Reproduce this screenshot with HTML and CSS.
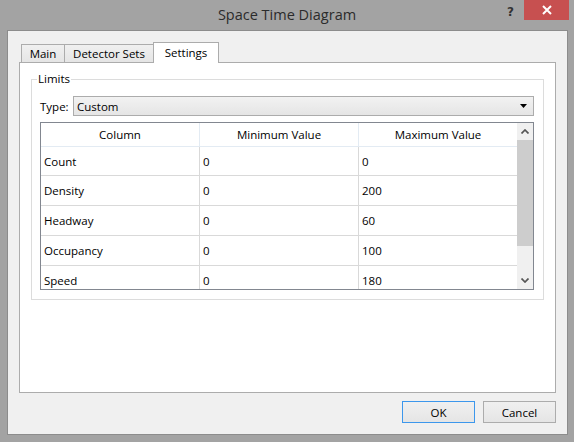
FILE: index.html
```html
<!DOCTYPE html>
<html lang="en">
<head>
    <meta charset="UTF-8">
    <title>Space Time Diagram</title>
    <link rel="stylesheet" href="styles.css">
</head>
<body>
    <div class="window">
        <!-- title bar -->
        <div class="titlebar">
            <div></div>
            <div class="title">Space Time Diagram</div>
            <div class="controls">
                <span class="help">?</span>
                <div class="close">
                    <svg width="10" height="10" viewBox="0 0 10 10">
                        <path d="M1 1 L9 9 M9 1 L1 9" stroke="#fff" stroke-width="2"/>
                    </svg>
                </div>
            </div>
        </div>

        <div class="client">
            <!-- tabs -->
            <div class="tabs">
                <div class="tab tab-main">Main</div>
                <div class="tab tab-sets">Detector Sets</div>
                <div class="tab tab-settings active">Settings</div>
            </div>

            <div class="panel">
                <fieldset class="limits">
                    <legend>Limits</legend>
                    <div class="type-row">
                        <label>Type:</label>
                        <div class="combo">
                            <span>Custom</span>
                            <svg width="7" height="4" viewBox="0 0 7 4"><path d="M0 0 H7 L3.5 4 Z" fill="#000"/></svg>
                        </div>
                    </div>

                    <div class="grid">
                        <div class="grid-body">
                            <div class="cell head">Column</div>
                            <div class="cell head">Minimum Value</div>
                            <div class="cell head">Maximum Value</div>

                            <div class="cell">Count</div>
                            <div class="cell">0</div>
                            <div class="cell">0</div>

                            <div class="cell">Density</div>
                            <div class="cell">0</div>
                            <div class="cell">200</div>

                            <div class="cell">Headway</div>
                            <div class="cell">0</div>
                            <div class="cell">60</div>

                            <div class="cell">Occupancy</div>
                            <div class="cell">0</div>
                            <div class="cell">100</div>

                            <div class="cell">Speed</div>
                            <div class="cell">0</div>
                            <div class="cell">180</div>
                        </div>
                        <div class="scrollbar">
                            <div class="arrow">
                                <svg width="8" height="5" viewBox="0 0 8 5"><path d="M0.5 4.5 L4 1 L7.5 4.5" fill="none" stroke="#555" stroke-width="1.7"/></svg>
                            </div>
                            <div class="thumb"></div>
                            <div class="track"></div>
                            <div class="arrow">
                                <svg width="8" height="5" viewBox="0 0 8 5"><path d="M0.5 0.5 L4 4 L7.5 0.5" fill="none" stroke="#555" stroke-width="1.7"/></svg>
                            </div>
                        </div>
                    </div>
                </fieldset>
            </div>

            <div class="buttons">
                <button class="btn default">OK</button>
                <button class="btn">Cancel</button>
            </div>
        </div>
    </div>
</body>
</html>
```

FILE: styles.css
```css
/* base */
* {
    box-sizing: border-box;
}

body {
    margin: 0;
    font-family: "Open Sans", "Liberation Sans", sans-serif;
    font-size: 11.5px;
    color: #000;
}

.window {
    width: 574px;
    height: 442px;
    background-color: #a3a3a3;
    display: flex;
    flex-direction: column;
}

/* title bar */
.titlebar {
    height: 30px;
    display: grid;
    grid-template-columns: 1fr auto 1fr;
}

.title {
    font-size: 14.5px;
    color: #2b2b2b;
    line-height: 30px;
}

.controls {
    justify-self: end;
    display: flex;
    align-items: flex-start;
    margin-right: 5px;
}

.help {
    font-family: "DejaVu Sans", sans-serif;
    font-weight: bold;
    font-size: 12px;
    color: #333;
    line-height: 12px;
    margin-top: 6px;
    margin-right: 10px;
}

.close {
    width: 45px;
    height: 20px;
    background-color: #c75050;
    display: flex;
    align-items: center;
    justify-content: center;
}

/* client area */
.client {
    flex: 1;
    margin: 0 6px 7px 7px;
    background-color: #f0f0f0;
    border: 1px solid #8c8c8c;
    padding: 11px;
    display: flex;
    flex-direction: column;
}

.tabs {
    display: flex;
    align-items: flex-end;
    height: 20px;
    padding-left: 2px;
}

.tab {
    height: 18px;
    border: 1px solid #acacac;
    border-bottom: none;
    background: linear-gradient(#f0f0f0, #e5e5e5);
    text-align: center;
    line-height: 17px;
    margin-right: -1px;
}

.tab-main {
    width: 44px;
}

.tab-sets {
    width: 90px;
}

.tab-settings {
    width: 66px;
}

.tab.active {
    height: 21px;
    margin-bottom: -1px;
    background: #fff;
    position: relative;
    z-index: 1;
    line-height: 19px;
}

.panel {
    flex: 1;
    background-color: #fff;
    border: 1px solid #acacac;
}

/* group box */
.limits {
    margin: 9px 11px 0;
    border: 1px solid #dcdcdc;
    padding: 10px 9px 9px 8px;
    min-width: 0;
}

.limits legend {
    padding: 0 1px;
    margin-left: -3px;
    line-height: 14px;
}

.type-row {
    display: flex;
    align-items: center;
}

.type-row label {
    width: 33px;
}

.combo {
    flex: 1;
    height: 20px;
    border: 1px solid #acacac;
    background: linear-gradient(#f2f2f2, #e5e5e5);
    display: flex;
    align-items: center;
    justify-content: space-between;
    padding: 0 6px 0 3px;
}

/* data grid */
.grid {
    margin-top: 6px;
    height: 168px;
    border: 1px solid #828790;
    display: flex;
}

.grid-body {
    flex: 1;
    overflow: hidden;
    display: grid;
    grid-template-columns: 159px 159px 158px;
    grid-auto-rows: 30px;
    grid-template-rows: 24px 29px;
    align-content: start;
}

.cell {
    border-right: 1px solid #d9d9d9;
    border-bottom: 1px solid #d9d9d9;
    padding-left: 3px;
    display: flex;
    align-items: center;
}

.cell:nth-child(3n) {
    border-right: none;
}

.cell.head {
    justify-content: center;
    padding-left: 0;
    border-color: #e3ebf3;
}

.scrollbar {
    width: 16px;
    background-color: #f0f0f0;
    display: flex;
    flex-direction: column;
}

.arrow {
    height: 17px;
    display: flex;
    align-items: center;
    justify-content: center;
}

.thumb {
    height: 106px;
    background-color: #cdcdcd;
}

.track {
    flex: 1;
}

/* dialog buttons */
.buttons {
    margin-top: 8px;
    display: flex;
    justify-content: flex-end;
    gap: 8px;
}

.btn {
    width: 73px;
    height: 22px;
    border: 1px solid #acacac;
    background: linear-gradient(#f0f0f0, #e5e5e5);
    font-family: inherit;
    font-size: 11.5px;
    color: #000;
    padding: 0;
}

.btn.default {
    border-color: #3c97ec;
}
```
